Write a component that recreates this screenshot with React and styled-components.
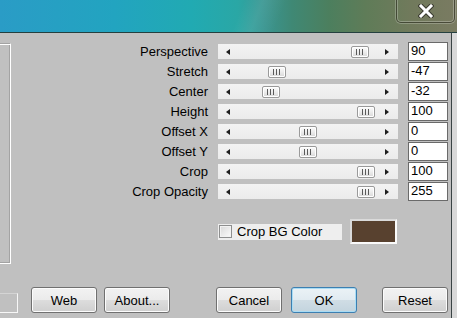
import React from "react";
import styled, { createGlobalStyle, css } from "styled-components";

const Global = createGlobalStyle`
  html, body { margin: 0; padding: 0; overflow: hidden; background: #c0c0c0; }
  body { font-family: "Liberation Sans", Arial, sans-serif; font-size: 13px; color: #000; }
  * { box-sizing: border-box; }
`;

const Screen = styled.div`
  width: 457px;
  height: 318px;
  display: flex;
  flex-direction: column;
  overflow: hidden;
`;

const TitleBar = styled.div`
  height: 32px;
  flex: none;
  display: flex;
  justify-content: flex-end;
  align-items: flex-start;
  padding-right: 2px;
  background:
    linear-gradient(112deg, transparent 52%, rgba(255,255,255,0.07) 56%, transparent 61%),
    linear-gradient(90deg, #2a9cc6 0%, #22a4c0 25%, #21aab2 42%, #2aa7a5 52%, #3a9590 58%, #3f8874 64%, #4c7f5e 72%, #5f7c58 80%, #717a5c 90%, #7a7b62 100%);
`;

const CloseButton = styled.div`
  width: 59px;
  height: 24px;
  margin-top: -1px;
  display: flex;
  align-items: center;
  justify-content: center;
  border: 1px solid rgba(35, 35, 25, 0.55);
  border-top: none;
  border-radius: 0 0 5px 5px;
  box-shadow: inset 0 0 0 1px rgba(255, 255, 255, 0.25), 0 0 0 1px rgba(255, 255, 255, 0.22);
`;

const Window = styled.div`
  flex: 1;
  display: flex;
`;

const Client = styled.div`
  flex: 1;
  display: flex;
  flex-direction: column;
  background: #c0c0c0;
  border-top: 1px solid #24403f;
  border-right: 1px solid #3a4445;
`;

const FrameEdge = styled.div`
  width: 5px;
  background: #d9d9d9;
  border-top: 1px solid #24403f;
`;

const Upper = styled.div`
  display: flex;
`;

const GroupEdge = styled.div`
  width: 11px;
  height: 221px;
  margin-top: 10px;
  border-top: 1px solid #a3a3a3;
  border-right: 1px solid #ffffff;
  border-bottom: 1px solid #ffffff;
  box-shadow: inset 0 1px 0 #ffffff, inset -1px 0 0 #a3a3a3, inset 0 -1px 0 #a3a3a3;
`;

const Panel = styled.div`
  margin-left: auto;
  padding-top: 9px;
  padding-right: 3px;
  display: flex;
  flex-direction: column;
`;

const SliderGrid = styled.div`
  display: grid;
  grid-template-columns: 88px 180px 40px;
  column-gap: 10px;
  grid-auto-rows: 20px;
  align-items: start;
`;

const Label = styled.div`
  line-height: 20px;
  text-align: right;
  white-space: nowrap;
`;

const Track = styled.div`
  position: relative;
  height: 15px;
  margin-top: 2px;
  background: linear-gradient(#f3f3f3, #ebebeb);

  &::before, &::after {
    content: "";
    position: absolute;
    top: 5px;
    width: 0;
    height: 0;
    border-top: 3px solid transparent;
    border-bottom: 3px solid transparent;
  }
  &::before {
    left: 8px;
    border-right: 4px solid #1e1e1e;
  }
  &::after {
    right: 9px;
    border-left: 4px solid #1e1e1e;
  }
`;

const Thumb = styled.div`
  position: absolute;
  top: 2px;
  width: 18px;
  height: 12px;
  border: 1px solid #9a9a9a;
  border-radius: 2px;
  background: linear-gradient(#fdfdfd, #ececec 50%, #d8d8d8);
  box-shadow: inset 0 0 0 1px #ffffff;

  &::after {
    content: "";
    position: absolute;
    left: 4px;
    top: 2px;
    width: 7px;
    height: 6px;
    background: repeating-linear-gradient(90deg, #5a5a5a 0 1px, transparent 1px 3px);
  }
`;

const ValueBox = styled.div`
  height: 19px;
  border: 1px solid #6a6a6a;
  background: #ffffff;
  padding-left: 2px;
  line-height: 16px;
  white-space: nowrap;
`;

const OptionRow = styled.div`
  display: flex;
  align-items: center;
  height: 25px;
  margin-top: 17px;
  margin-left: 98px;
  gap: 8px;
`;

const CheckLabel = styled.div`
  display: flex;
  align-items: center;
  gap: 5px;
  width: 124px;
  height: 16px;
  padding-left: 1px;
  background: #eeeeee;
  white-space: nowrap;
`;

const CheckBox = styled.div`
  width: 13px;
  height: 13px;
  border: 1px solid #8e8f8f;
  background: linear-gradient(135deg, #d9d9d9, #fbfbfb);
  box-shadow: inset 0 0 0 1px #f2f2f2;
`;

const Swatch = styled.div`
  width: 47px;
  height: 25px;
  border: 2px solid;
  border-color: #dadada #fafafa #fafafa #dadada;
  background: ${(p) => p.$color};
`;

const BottomRow = styled.div`
  margin-top: auto;
  margin-bottom: 5px;
  height: 26px;
  display: flex;
  align-items: flex-end;
  padding-right: 3px;
`;

const StubBox = styled.div`
  width: 18px;
  height: 20px;
  border-top: 1px solid #d4d4d4;
  border-right: 1px solid #f7f7f7;
  border-bottom: 1px solid #f7f7f7;
`;

const Button = styled.button`
  width: 66px;
  height: 26px;
  margin: 0 0 0 ${(p) => p.$gap}px;
  padding: 0;
  font-family: "Liberation Sans", Arial, sans-serif;
  font-size: 13px;
  color: #000;
  border: 1px solid #707070;
  border-radius: 3px;
  background: linear-gradient(#f2f2f2 0%, #ebebeb 49%, #dddddd 50%, #cfcfcf 100%);
  box-shadow: inset 0 0 0 1px #fcfcfc;
  ${(p) =>
    p.$default &&
    css`
      border-color: #3c7fb1;
      background: linear-gradient(#ebf2f6 0%, #e1ebf1 49%, #d0dde5 50%, #c3d4de 100%);
      box-shadow: inset 0 0 0 1px #a9dcf4;
    `}
`;

const sliders = [
  { label: "Perspective", value: "90", pos: 133 },
  { label: "Stretch", value: "-47", pos: 50 },
  { label: "Center", value: "-32", pos: 44 },
  { label: "Height", value: "100", pos: 139 },
  { label: "Offset X", value: "0", pos: 81 },
  { label: "Offset Y", value: "0", pos: 81 },
  { label: "Crop", value: "100", pos: 139 },
  { label: "Crop Opacity", value: "255", pos: 139 },
];

const buttons = [
  { text: "Web", gap: 13 },
  { text: "About...", gap: 7 },
  { text: "Cancel", gap: 46 },
  { text: "OK", gap: 9, isDefault: true },
  { text: "Reset", gap: 25 },
];

function CloseGlyph() {
  return (
    <svg width="16" height="14" viewBox="0 0 16 14">
      <path d="M3 2 L13 12 M13 2 L3 12" stroke="#3a3a30" strokeWidth="5" strokeLinecap="square" fill="none" />
      <path d="M3 2 L13 12 M13 2 L3 12" stroke="#ffffff" strokeWidth="3" strokeLinecap="square" fill="none" />
    </svg>
  );
}

export default function App() {
  return (
    <Screen>
      <Global />
      <TitleBar>
        <CloseButton>
          <CloseGlyph />
        </CloseButton>
      </TitleBar>
      <Window>
        <Client>
          <Upper>
            <GroupEdge />
            <Panel>
              <SliderGrid>
                {sliders.map((s) => (
                  <React.Fragment key={s.label}>
                    <Label>{s.label}</Label>
                    <Track>
                      <Thumb style={{ left: s.pos }} />
                    </Track>
                    <ValueBox>{s.value}</ValueBox>
                  </React.Fragment>
                ))}
              </SliderGrid>
              <OptionRow>
                <CheckLabel>
                  <CheckBox />
                  Crop BG Color
                </CheckLabel>
                <Swatch $color="#58412f" />
              </OptionRow>
            </Panel>
          </Upper>
          <BottomRow>
            <StubBox />
            {buttons.map((b) => (
              <Button key={b.text} $gap={b.gap} $default={b.isDefault}>
                {b.text}
              </Button>
            ))}
          </BottomRow>
        </Client>
        <FrameEdge />
      </Window>
    </Screen>
  );
}
